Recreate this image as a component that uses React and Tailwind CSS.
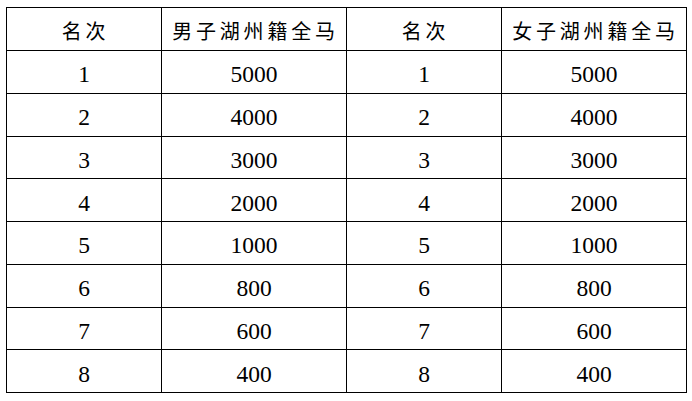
import React from 'react';

const rows = [
  [1, 5000, 1, 5000],
  [2, 4000, 2, 4000],
  [3, 3000, 3, 3000],
  [4, 2000, 4, 2000],
  [5, 1000, 5, 1000],
  [6, 800, 6, 800],
  [7, 600, 7, 600],
  [8, 400, 8, 400],
];

const headers = ['名次', '男子湖州籍全马', '名次', '女子湖州籍全马'];
const widths = ['w-[155px]', 'w-[185px]', 'w-[155px]', 'w-[185px]'];

export default function App() {
  return (
    <div
      className="w-[692px] h-[401px] bg-white pl-[6px] pt-[7px]"
      style={{ fontFamily: '"Liberation Serif", "Noto Sans CJK SC", serif' }}
    >
      <table className="border-collapse text-black">
        <thead>
          <tr>
            {headers.map((h, i) => (
              <th
                key={i}
                className={`${widths[i]} h-[43px] border border-black p-0 pt-[6px] pl-[3px] text-center font-normal text-[20px] tracking-[3.8px] align-middle`}
              >
                {h}
              </th>
            ))}
          </tr>
        </thead>
        <tbody>
          {rows.map((r, ri) => (
            <tr key={ri}>
              {r.map((v, ci) => (
                <td
                  key={ci}
                  className="h-[42.75px] border border-black p-0 pt-[6px] text-center text-[23.5px] align-middle"
                >
                  {v}
                </td>
              ))}
            </tr>
          ))}
        </tbody>
      </table>
    </div>
  );
}
